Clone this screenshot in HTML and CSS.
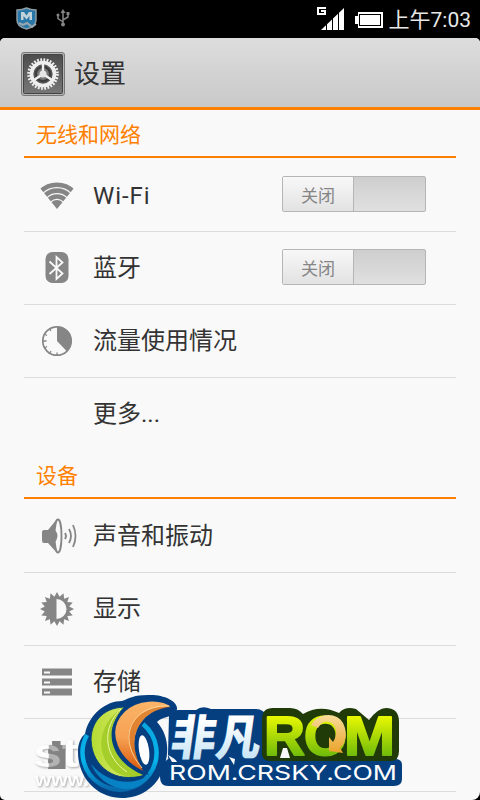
FILE: index.html
```html
<!DOCTYPE html>
<html lang="zh-CN">
  <head>
    <meta charset="UTF-8" />
    <meta name="viewport" content="width=device-width, initial-scale=1.0" />
    <title>设置</title>
    <link rel="stylesheet" href="styles.css">
  </head>
  <body>
    <div class="status-bar">
      <div class="status-left">
        <svg class="shield-icon" width="22" height="24" viewBox="0 0 22 24">
          <path d="M1 3Q6 3 10.500 1Q15 3 20 3V13Q20 20 10.500 22Q1 20 1 13Z" fill="#2778a8" stroke="#8d9ba3" stroke-width="1.500" />
          <path d="M5 13V5H8L10.500 8.500L13 5H16V13H13.500V9L10.500 12.500L7.500 9V13Z" fill="#c3d1d8" />
          <path d="M3 16L7 18L11 16L16 20L20 17" fill="none" stroke="#9aa8ae" stroke-width="2" />
        </svg>
        <svg class="usb-icon" width="16" height="20" viewBox="0 0 16 20" fill="none" stroke="#858585" stroke-width="1.500">
          <path d="M7 3V16M7 13L2 9.500V6M7 11L12 8V5" />
          <path d="M4.500 4L7 0L9.500 4Z" fill="#858585" stroke="none" />
          <circle cx="7" cy="15.500" r="2" fill="#858585" stroke="none" />
          <circle cx="2" cy="6" r="1.500" fill="#858585" stroke="none" />
          <path d="M10.500 3H13.500V6H10.500Z" fill="#858585" stroke="none" />
        </svg>
      </div>
      <div class="status-right">
        <svg class="signal-icon" width="28" height="24" viewBox="0 0 28 24">
          <path d="M9 1H1V7H8V4H4" fill="none" stroke="#fff" stroke-width="2" />
          <path d="M4 23L27 1V23Z" fill="#fff" />
          <path d="M9.500 14V23M15.500 8V23M21.500 3V23" stroke="#000" />
        </svg>
        <svg class="battery-icon" width="28" height="16" viewBox="0 0 28 16">
          <path d="M3 0H28V16H3V12H0V4H3Z" fill="#fff" />
          <rect x="4.500" y="2.500" width="21" height="11" fill="#fff" stroke="#000" />
        </svg>
        <span class="clock">上午7:03</span>
      </div>
    </div>

    <div class="screen">
      <header class="title-bar">
        <svg width="44" height="44" viewBox="0 0 44 44">
          <defs>
            <linearGradient id="tile" x2="0" y2="1">
              <stop stop-color="#4c4c4c" />
              <stop offset="1" stop-color="#777" />
            </linearGradient>
          </defs>
          <rect x="0.500" y="0.500" width="43" height="43" rx="2.500" fill="#b5b5b5" stroke="#777" />
          <rect x="2.500" y="2.500" width="39" height="39" rx="1" fill="url(#tile)" stroke="#444" />
          <circle cx="22" cy="22" r="14.300" fill="none" stroke="#eee" stroke-width="3" stroke-dasharray="1.800 1.410" />
          <circle cx="22" cy="22" r="11.500" fill="#555" stroke="#eee" stroke-width="3.600" />
          <circle cx="22" cy="22" r="7" fill="#777" stroke="#3c3c3c" stroke-width="2" />
          <path d="M22 22V11M22 22L13 28M22 22L31 28" stroke="#f0f0f0" stroke-width="2.400" />
          <circle cx="22" cy="22" r="3.500" fill="#e5e5e5" />
        </svg>
        <h1>设置</h1>
      </header>

      <main class="settings">
        <h2>无线和网络</h2>
        <ul>
          <li class="row">
            <svg class="icon" viewBox="0 0 36 36">
              <clipPath id="fan"><path d="M18 32L-1.500 8V0H37.500V8Z" /></clipPath>
              <g clip-path="url(#fan)" fill="none" stroke="#868686">
                <circle cx="18" cy="31" r="23.300" stroke-width="4.600" />
                <circle cx="18" cy="31" r="17.300" stroke-width="4.800" />
                <circle cx="18" cy="31" r="11.500" stroke-width="4.600" />
                <circle cx="18" cy="31" r="8" fill="#868686" stroke="none" />
              </g>
            </svg>
            <span class="label wifi">Wi-Fi</span>
            <span class="switch"><span class="thumb">关闭</span></span>
          </li>
          <li class="row">
            <svg class="icon" viewBox="0 0 36 36">
              <rect x="6.500" y="2" width="23" height="31" rx="7" fill="#868686" />
              <path d="M10.500 11.500L23.500 23.500L17.500 29V7L23.500 12.500L10.500 24" fill="none" stroke="#f9f9f9" stroke-width="1.800" />
            </svg>
            <span class="label">蓝牙</span>
            <span class="switch"><span class="thumb">关闭</span></span>
          </li>
          <li class="row">
            <svg class="icon" viewBox="0 0 36 36">
              <circle cx="18" cy="18" r="14.200" fill="none" stroke="#868686" stroke-width="1.700" />
              <path d="M18 18V3.500A14.500 14.500 0 0 1 28 28.500Z" fill="#868686" />
              <path d="M4 18H7.500M18 32.500V29.500M10.500 5.500L12 8M5.500 11L8 12.500M5.500 25L8 23.500M10.500 30.500L12 28" stroke="#868686" stroke-width="1.300" />
            </svg>
            <span class="label">流量使用情况</span>
          </li>
          <li class="row">
            <span class="icon"></span>
            <span class="label">更多...</span>
          </li>
        </ul>

        <h2>设备</h2>
        <ul>
          <li class="row">
            <svg class="icon" viewBox="0 0 36 36">
              <path d="M3 14Q3 12 5 12H9L18 1V35L9 25H5Q3 25 3 22Z" fill="#868686" />
              <ellipse cx="19" cy="18" rx="3.500" ry="16.500" fill="#f9f9f9" stroke="#868686" stroke-width="1.800" />
              <path d="M15 11Q22 18 15 25Z" fill="#868686" />
              <path d="M26 15Q28 18 26 21M30 11Q34 18 30 25M34 7Q39 18 34 29" fill="none" stroke="#868686" stroke-width="1.800" />
            </svg>
            <span class="label">声音和振动</span>
          </li>
          <li class="row">
            <svg class="icon" viewBox="0 0 36 36">
              <path d="M18 1L20.600 5.800L24.500 2.300L25.100 7.700L30 6L28.300 10.900L33.700 11.500L30.200 15.400L35 18L30.200 20.600L33.700 24.500L28.300 25.100L30 30L25.100 28.300L24.500 33.700L20.600 30.200L18 35L15.400 30.200L11.500 33.700L10.900 28.300L6 30L7.700 25.100L2.300 24.500L5.800 20.600L1 18L5.800 15.400L2.300 11.500L7.700 10.900L6 6L10.900 7.700L11.500 2.300L15.400 5.800Z" fill="#868686" />
              <path d="M17.500 8A10 10 0 0 1 17.500 28Z" fill="#f9f9f9" />
            </svg>
            <span class="label">显示</span>
          </li>
          <li class="row">
            <svg class="icon" viewBox="0 0 36 36">
              <path d="M3 4.500H33V11.500H3ZM3 14.500H33V21.500H3ZM3 24.500H33V31.500H3Z" fill="#868686" />
              <path d="M5 8.500H11M5 18.500H11M5 28.500H11" stroke="#f9f9f9" stroke-width="2" />
            </svg>
            <span class="label">存储</span>
          </li>
          <li class="row">
            <svg class="icon" viewBox="0 0 36 36">
              <path d="M9 8H13V4H21V8H26V32H9Z" fill="#8d8d8d" />
            </svg>
            <span class="label"></span>
          </li>
        </ul>
      </main>
    </div>

    <svg class="watermark" width="400" height="115" viewBox="30 685 400 115">
      <defs>
        <linearGradient id="green" x2="1" y2="0">
          <stop stop-color="#b5dc31" />
          <stop offset="0.500" stop-color="#cde55a" />
          <stop offset="1" stop-color="#83b817" />
        </linearGradient>
        <linearGradient id="orange" x1="0.600" x2="0.500" y2="1">
          <stop stop-color="#fbb568" />
          <stop offset="0.550" stop-color="#f6a153" />
          <stop offset="1" stop-color="#d95608" />
        </linearGradient>
        <linearGradient id="ring" x2="0" y2="1">
          <stop stop-color="#0ba6df" />
          <stop offset="0.550" stop-color="#05b5ec" />
          <stop offset="1" stop-color="#0869ac" />
        </linearGradient>
        <linearGradient id="ice" x2="0" y2="1">
          <stop offset="0.300" stop-color="#fff" />
          <stop offset="1" stop-color="#b9def3" />
        </linearGradient>
        <linearGradient id="lime" gradientUnits="userSpaceOnUse" x1="0" y1="714" x2="0" y2="758">
          <stop stop-color="#effb00" />
          <stop offset="1" stop-color="#69b80b" />
        </linearGradient>
        <linearGradient id="gold" x2="0" y2="1">
          <stop stop-color="#f7dc9a" />
          <stop offset="1" stop-color="#eba32a" />
        </linearGradient>
      </defs>
      <g class="site">
        <text x="33" y="767" font-size="40" textLength="46" lengthAdjust="spacingAndGlyphs">st</text>
        <text x="35" y="786" font-size="18" textLength="54" lengthAdjust="spacingAndGlyphs">www.</text>
      </g>
      <path d="M49 745H53V741H61V745H66V769H49Z" fill="#777" opacity="0.5" />

      <!-- swirl -->
      <path d="M85 734C89 714 106 701 122 701C130 698 134 695 148 695C163 694 178 701 177 709C176 718 164 715 157 722C167 733 171 750 163 770C156 788 140 798 122 798C97 798 78 778 78 752C78 743 81 737 85 734Z" fill="#053f80" />
      <ellipse cx="144" cy="750" rx="5" ry="15" transform="rotate(-8 144 750)" fill="#fff" />
      <path d="M87 735A37 37 0 1 0 143 724" fill="none" stroke="url(#ring)" stroke-width="4.500" />
      <path d="M91 764C106 782 130 787 148 776C138 797 103 792 91 764Z" fill="#0782c4" />
      <path d="M124 707C101 708 91 724 91 740C92 768 117 784 143 775C115 764 98 739 124 707Z" fill="url(#green)" stroke="#053f80" />
      <path d="M124 707C103 727 108 760 143 775C133 778 124 776 117 773C91 755 100 720 124 707Z" fill="#a5ce2b" />
      <path d="M121 709C101 728 104 757 127 772" fill="none" stroke="#edf7a3" />
      <path d="M173 707C160 697 137 699 124 711C103 732 119 763 146 773C137 762 132 744 138 730C144 716 156 709 173 707Z" fill="url(#orange)" stroke="#053f80" stroke-width="2" />
      <path d="M171 707C137 704 111 733 143 769C136 759 131 744 137 729C144 714 156 709 171 707Z" fill="#ce650e" opacity="0.55" />
      <path d="M169 706C137 704 113 733 142 768" fill="none" stroke="#ffd39b" />

      <!-- rounded backing of the lettering -->
      <path d="M178 710H196Q202 705 211 709H256Q264 709 268 718V766H175Q167 762 168 754L169 716Q171 710 178 710Z" fill="#053f80" />
      <path class="backing" d="M168 759H180L192 756H263V759H395Q402 759 402 765V779Q402 786 394 786H168Q160 786 160 777V766Z" />
      <path d="M168 755L172 762H177Q176 759 168 755ZM229 757L235 759L234 765Z" fill="#f9f9f9" />
      <path d="M262 719Q262 708 273 708H290Q298 708 303 714Q320 704 339 713Q345 706 356 709L369 720Q378 708 386 708Q399 708 399 722V751Q399 761 391 761H270Q261 761 262 750Z" fill="#203b08" />
      <path d="M283 748H287L290 758H280Z" fill="#f9f9f9" />

      <g transform="translate(169 755) skewX(-8)">
        <text class="brand-cn" x="0" y="0" textLength="90" lengthAdjust="spacingAndGlyphs">非凡</text>
      </g>
      <g class="rom">
        <text x="264" y="755" textLength="41" lengthAdjust="spacingAndGlyphs">R</text>
        <text x="304" y="755" textLength="43" lengthAdjust="spacingAndGlyphs">O</text>
        <text x="344" y="755" textLength="51" lengthAdjust="spacingAndGlyphs">M</text>
      </g>
      <path d="M311 725C319 712 337 712 343 723C348 733 346 743 340 748L343 753L329 751V737L333 742C338 735 337 724 329 722Q323 720 318 728Z" fill="url(#gold)" />
      <text class="domain" x="169" y="780" textLength="228" lengthAdjust="spacingAndGlyphs">ROM.CRSKY.COM</text>
    </svg>
  </body>
</html>
```
FILE: styles.css
```css
:root {
  --accent: #ff8000;
  --background-color: #f9f9f9;
  --border-color: #dcdcdc;
  --text-color: #333;
}

* {
  margin: 0;
  padding: 0;
  box-sizing: border-box;
}

body {
  width: 480px;
  height: 800px;
  position: relative;
  overflow: hidden;
  background-color: #000;
  color: var(--text-color);
  font-family: Roboto, "Noto Sans CJK SC", sans-serif;
}

.status-bar {
  height: 38px;
  padding: 0 9px 0 16px;
  display: flex;
  align-items: center;
  justify-content: space-between;
}

.status-left,
.status-right {
  display: flex;
  align-items: center;
}

.status-left {
  gap: 18px;
}

.signal-icon {
  margin-right: 10px;
}

.battery-icon {
  margin: 2px 6px 0 0;
}

.clock {
  padding-top: 2px;
  color: #e8e8e8;
  font-size: 21px;
  line-height: 36px;
  white-space: nowrap;
}

.screen {
  height: 762px;
  border-radius: 5px 5px 8px 5px;
  overflow: hidden;
  background-color: var(--background-color);
}

.title-bar {
  height: 72px;
  padding: 2px 21px 0;
  display: flex;
  align-items: center;
  gap: 9px;
  background: linear-gradient(#dddddd, #c9c9c9);
  border-bottom: 3px solid var(--accent);
}

h1 {
  padding-top: 1px;
  font-size: 26px;
  font-weight: 400;
  line-height: 40px;
}

.settings {
  padding: 0 24px;
}

h2 {
  height: 48px;
  padding-left: 12px;
  margin-bottom: 1px;
  border-bottom: 2px solid var(--accent);
  color: var(--accent);
  font-size: 21px;
  font-weight: 400;
  line-height: 51px;
}

ul {
  list-style: none;
}

.row {
  height: 73px;
  padding: 0 30px 0 15px;
  display: flex;
  align-items: center;
  border-bottom: 1px solid var(--border-color);
}

ul:first-of-type .row:last-child {
  border-bottom-color: transparent;
}

.icon {
  width: 36px;
  height: 36px;
  margin-right: 18px;
  overflow: visible;
}

.label {
  flex: 1;
  font-size: 24px;
  line-height: 36px;
}

.wifi {
  padding-top: 1px;
  letter-spacing: 0.9px;
}

.switch {
  width: 144px;
  height: 36px;
  margin-bottom: 2px;
  border: 1px solid #b5b5b5;
  border-radius: 2px;
  background: linear-gradient(#cecece, #e0e0e0);
}

.thumb {
  display: block;
  width: 71px;
  height: 34px;
  border-right: 1px solid #b5b5b5;
  background: linear-gradient(#f8f8f8, #e2e2e2);
  color: #858585;
  font-size: 17px;
  line-height: 38px;
  text-align: center;
}

/* Site logo over the list */
.watermark {
  position: absolute;
  left: 30px;
  top: 685px;
}

.site {
  fill: #fff;
  font-family: "Liberation Sans", sans-serif;
  font-weight: bold;
  filter: drop-shadow(1px 1px 1px #999);
  opacity: 0.85;
}

.backing {
  fill: #053f80;
}

.brand-cn {
  fill: url(#ice);
  font-family: "Noto Sans CJK SC", sans-serif;
  font-size: 48px;
  font-weight: 900;
}

.rom {
  fill: url(#lime);
  stroke: url(#lime);
  stroke-width: 2px;
  stroke-linejoin: round;
  font-family: "Liberation Sans", sans-serif;
  font-size: 55px;
  font-weight: bold;
}

.domain {
  fill: #fff;
  font-family: Inter, sans-serif;
  font-size: 20px;
  font-weight: 400;
}
```
